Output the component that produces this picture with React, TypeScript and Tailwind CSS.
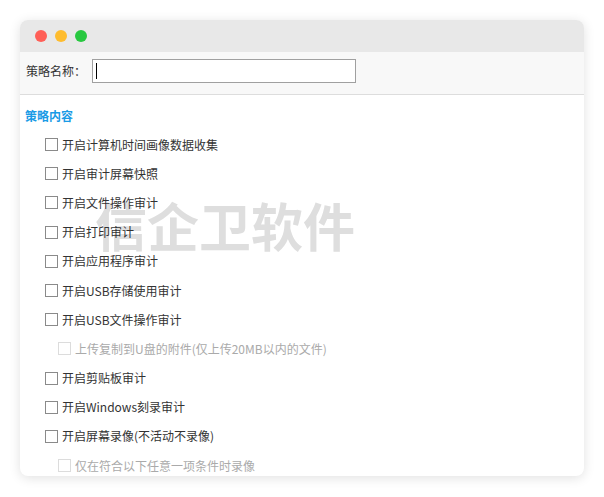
import React from "react";

const font = { fontFamily: '"Microsoft YaHei", "Noto Sans CJK SC", "Noto Sans", sans-serif' };

type Item = { label: string; sub?: boolean };

const items: Item[] = [
  { label: "开启计算机时间画像数据收集" },
  { label: "开启审计屏幕快照" },
  { label: "开启文件操作审计" },
  { label: "开启打印审计" },
  { label: "开启应用程序审计" },
  { label: "开启USB存储使用审计" },
  { label: "开启USB文件操作审计" },
  { label: "上传复制到U盘的附件(仅上传20MB以内的文件)", sub: true },
  { label: "开启剪贴板审计" },
  { label: "开启Windows刻录审计" },
  { label: "开启屏幕录像(不活动不录像)" },
  { label: "仅在符合以下任意一项条件时录像", sub: true },
];

export default function App() {
  return (
    <div className="w-[604px] h-[497px] bg-white pt-[20px] pl-[20px]" style={font}>
      <div className="w-[564px] h-[456px] rounded-[8px] overflow-hidden bg-white shadow-[0_2px_12px_rgba(0,0,0,0.12)] flex flex-col relative">
        <div className="absolute left-[75px] top-[170px] text-[52px] leading-[70px] font-bold text-[#dedede] whitespace-nowrap pointer-events-none select-none z-0">
          信企卫软件
        </div>
        <div className="h-[32px] bg-[#e8e8e8] flex items-center pl-[15px] gap-[8px] shrink-0 relative z-10">
          <span className="w-[12px] h-[12px] rounded-full bg-[#ff5f57]" />
          <span className="w-[12px] h-[12px] rounded-full bg-[#febc2e]" />
          <span className="w-[12px] h-[12px] rounded-full bg-[#28c840]" />
        </div>
        <div className="h-[43px] bg-[#f8f8f8] border-b border-[#dddddd] flex items-start pt-[7px] pl-[6px] shrink-0 relative z-10">
          <span className="text-[12px] leading-[24px] text-[#333333] w-[66px]">策略名称：</span>
          <div className="w-[264px] h-[24px] border border-[#a0a0a0] bg-white flex items-center pl-[3px]">
            <span className="w-[1px] h-[16px] bg-black" />
          </div>
        </div>
        <div className="pl-[5px] pt-[12px] flex flex-col relative z-10">
          <div className="text-[12px] leading-[18px] font-bold text-[#1a9be6] mb-[5px]">策略内容</div>
          {items.map((it, i) => (
            <div
              key={i}
              className={`flex items-center h-[29.2px] ${it.sub ? "pl-[33px]" : "pl-[20px]"}`}
            >
              <span
                className={`w-[13px] h-[13px] border bg-white shrink-0 ${
                  it.sub ? "border-[#dcdcdc]" : "border-[#8a8a8a]"
                }`}
              />
              <span
                className={`ml-[4px] text-[12px] leading-[16px] whitespace-nowrap ${
                  it.sub ? "text-[#aaaaaa]" : "text-[#333333]"
                }`}
              >
                {it.label}
              </span>
            </div>
          ))}
        </div>
      </div>
    </div>
  );
}
